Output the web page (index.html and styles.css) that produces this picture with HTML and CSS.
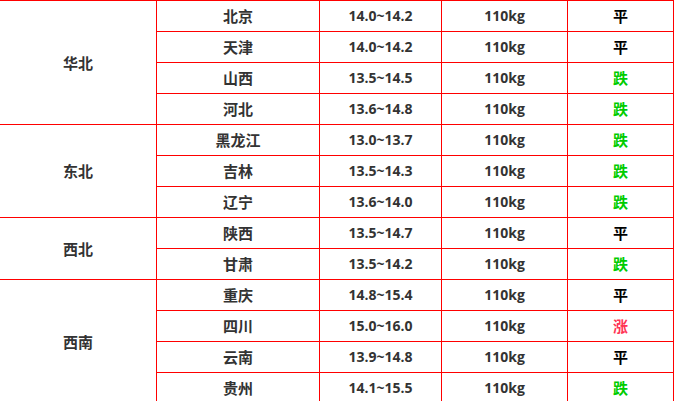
FILE: index.html
```html
<!DOCTYPE html>
<html lang="zh">
<head>
<meta charset="utf-8">
<title>生猪价格</title>
<link rel="stylesheet" href="styles.css">
</head>
<body>
<table class="price">
<tbody>
<tr><td class="region" rowspan="4">华北</td><td class="prov">北京</td><td class="range">14.0~14.2</td><td class="wt">110kg</td><td class="trend flat">平</td></tr>
<tr><td class="prov">天津</td><td class="range">14.0~14.2</td><td class="wt">110kg</td><td class="trend flat">平</td></tr>
<tr><td class="prov">山西</td><td class="range">13.5~14.5</td><td class="wt">110kg</td><td class="trend down">跌</td></tr>
<tr><td class="prov">河北</td><td class="range">13.6~14.8</td><td class="wt">110kg</td><td class="trend down">跌</td></tr>
<tr><td class="region" rowspan="3">东北</td><td class="prov">黑龙江</td><td class="range">13.0~13.7</td><td class="wt">110kg</td><td class="trend down">跌</td></tr>
<tr><td class="prov">吉林</td><td class="range">13.5~14.3</td><td class="wt">110kg</td><td class="trend down">跌</td></tr>
<tr><td class="prov">辽宁</td><td class="range">13.6~14.0</td><td class="wt">110kg</td><td class="trend down">跌</td></tr>
<tr><td class="region" rowspan="2">西北</td><td class="prov">陕西</td><td class="range">13.5~14.7</td><td class="wt">110kg</td><td class="trend flat">平</td></tr>
<tr><td class="prov">甘肃</td><td class="range">13.5~14.2</td><td class="wt">110kg</td><td class="trend down">跌</td></tr>
<tr><td class="region" rowspan="4">西南</td><td class="prov">重庆</td><td class="range">14.8~15.4</td><td class="wt">110kg</td><td class="trend flat">平</td></tr>
<tr><td class="prov">四川</td><td class="range">15.0~16.0</td><td class="wt">110kg</td><td class="trend up">涨</td></tr>
<tr><td class="prov">云南</td><td class="range">13.9~14.8</td><td class="wt">110kg</td><td class="trend flat">平</td></tr>
<tr><td class="prov">贵州</td><td class="range">14.1~15.5</td><td class="wt">110kg</td><td class="trend down">跌</td></tr>
</tbody>
</table>
</body>
</html>
```
FILE: styles.css
```css
html, body {
  margin: 0;
  padding: 0;
  background: #fff;
}
.price {
  border-collapse: separate;
  border-spacing: 0;
  border-top: 1px solid #f00;
  table-layout: fixed;
  width: 674px;
  font-family: "Open Sans", "Noto Sans CJK SC", sans-serif;
  font-weight: bold;
  font-size: 14px;
  color: #333;
}
.price td {
  padding: 0;
  height: 30px;
  text-align: center;
  vertical-align: middle;
  border-right: 1px solid #f00;
  border-bottom: 1px solid #f00;
  box-sizing: content-box;
  line-height: 30px;
}
.region { width: 156px; font-size: 15px; font-family: "Noto Sans CJK SC", sans-serif; }
.prov { width: 162px; font-size: 15px; font-family: "Noto Sans CJK SC", sans-serif; }
.range { width: 121px; }
.wt { width: 125px; }
.trend { width: 105px; font-size: 15px; font-family: "Noto Sans CJK SC", sans-serif; }
.flat { color: #000; }
.down { color: #0c0; }
.up { color: #ff3355; }
```
